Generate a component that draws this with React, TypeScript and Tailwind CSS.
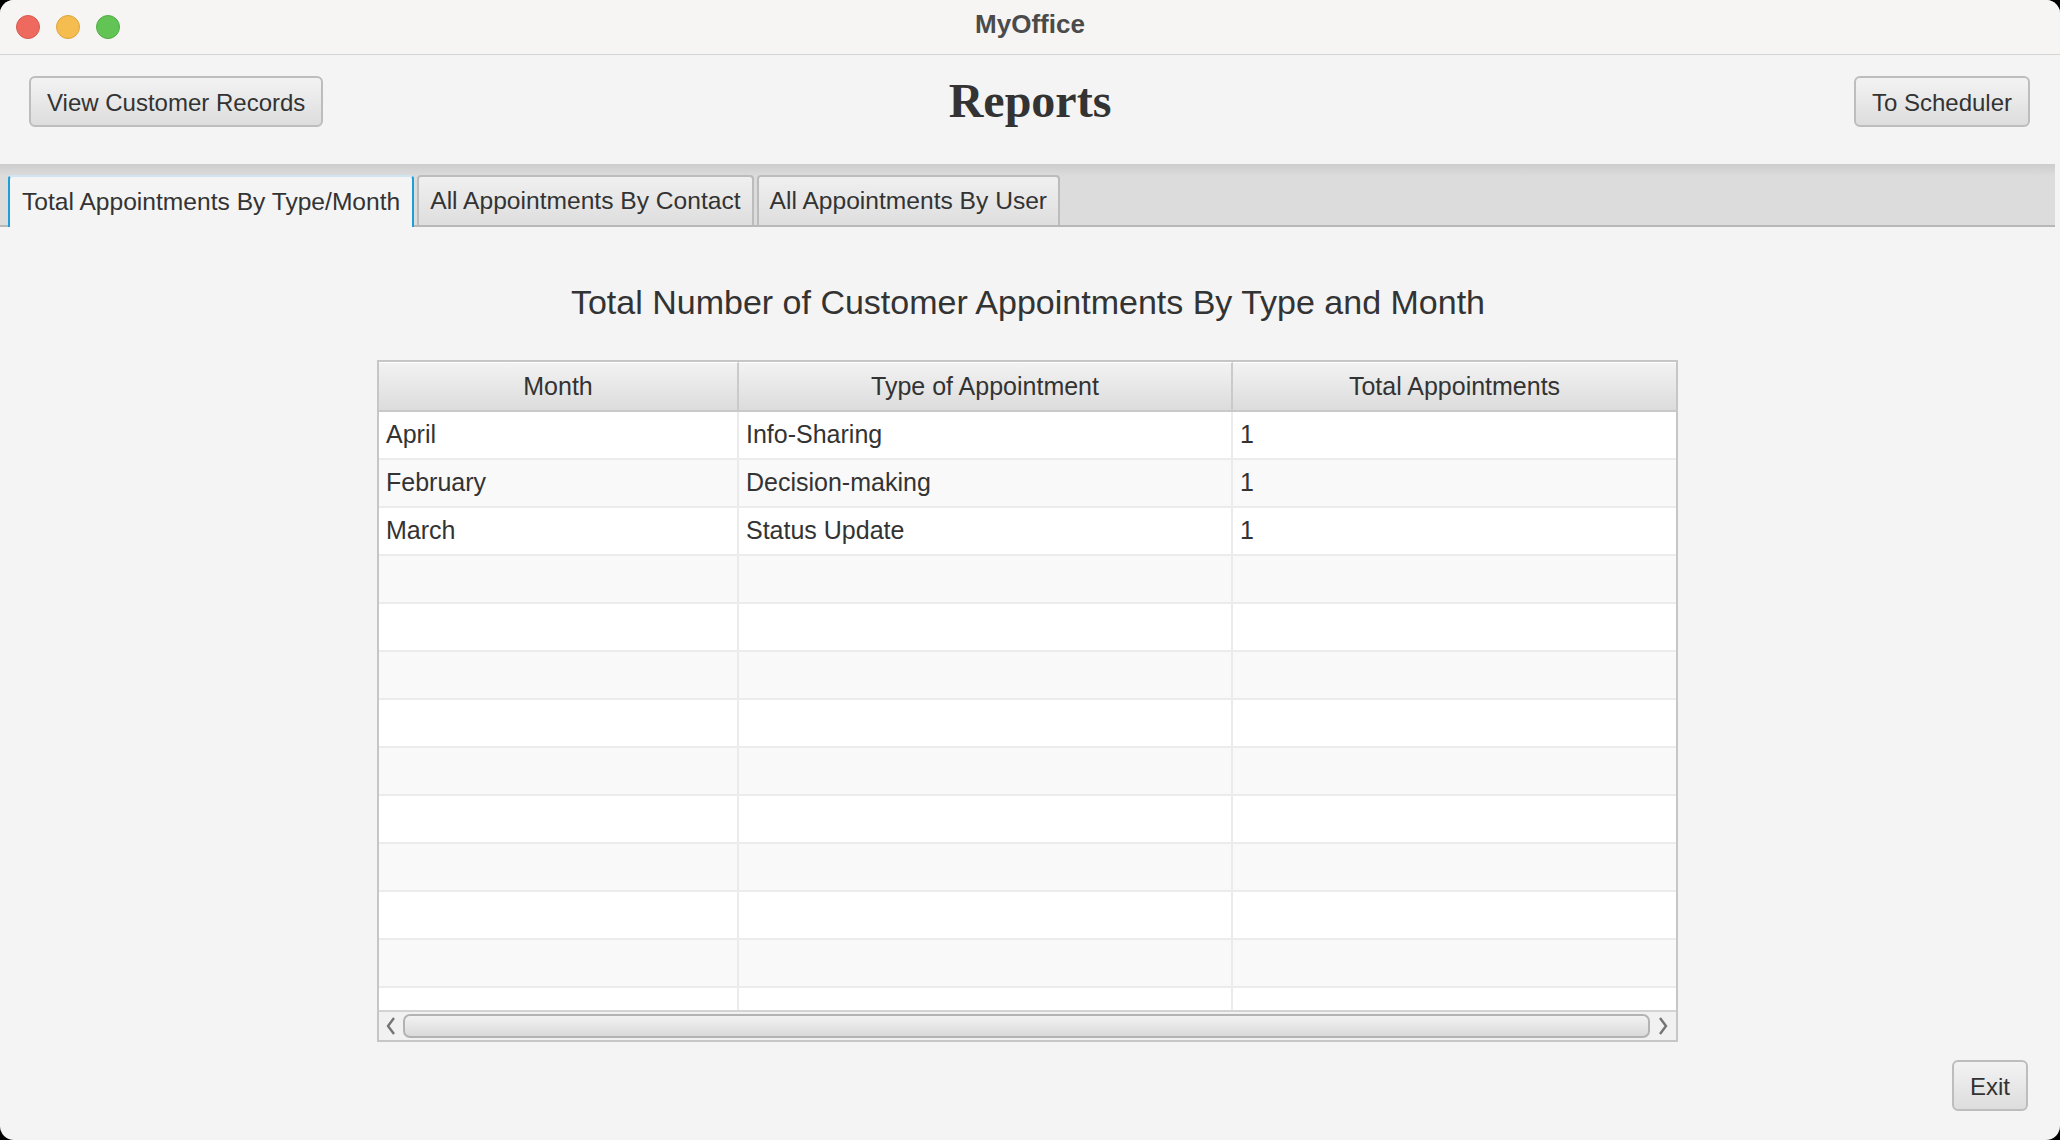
const rows = [
  ["April", "Info-Sharing", "1"],
  ["February", "Decision-making", "1"],
  ["March", "Status Update", "1"],
  ["", "", ""],
  ["", "", ""],
  ["", "", ""],
  ["", "", ""],
  ["", "", ""],
  ["", "", ""],
  ["", "", ""],
  ["", "", ""],
  ["", "", ""],
  ["", "", ""],
];

const tabs = ["Total Appointments By Type/Month", "All Appointments By Contact", "All Appointments By User"];

const FxButton = ({ label }: { label: string }) => (
  <button className="h-[51px] px-[16px] pt-[3px] rounded-[6px] border-2 border-[#bdbdbd] bg-gradient-to-b from-[#f3f3f3] to-[#dddddd] text-[24px] text-[#333333] leading-none">
    {label}
  </button>
);

const Chevron = ({ dir }: { dir: "left" | "right" }) => (
  <svg width="12" height="20" viewBox="0 0 12 20" fill="none">
    <path
      d={dir === "left" ? "M9 2 L3 10 L9 18" : "M3 2 L9 10 L3 18"}
      stroke="#747474"
      strokeWidth="2.4"
      strokeLinejoin="miter"
    />
  </svg>
);

export default function App() {
  return (
    <div className="w-[2060px] h-[1140px] bg-black font-['Liberation_Sans',Arial,sans-serif]">
      <div className="w-full h-full rounded-[14px] overflow-hidden bg-[#f4f4f4] flex flex-col">
        {/* title bar */}
        <div className="h-[55px] shrink-0 bg-[#f6f5f4] border-b border-[#d4d4d4] grid grid-cols-[1fr_auto_1fr] items-center">
          <div className="flex items-center gap-[16px] pl-[16px]">
            <span className="w-[24px] h-[24px] rounded-full bg-[#ee6a5f] border border-[#d85a50]" />
            <span className="w-[24px] h-[24px] rounded-full bg-[#f5bd4f] border border-[#dca53c]" />
            <span className="w-[24px] h-[24px] rounded-full bg-[#61c454] border border-[#52ad45]" />
          </div>
          <div className="text-[26px] font-bold text-[#4b4b4b] pb-[5px]">MyOffice</div>
          <div />
        </div>

        {/* header */}
        <div className="h-[109px] shrink-0 grid grid-cols-[1fr_auto_1fr] items-start pt-[21px] px-[29px]">
          <div>
            <FxButton label="View Customer Records" />
          </div>
          <div className="font-['Liberation_Serif',serif] font-bold text-[48px] text-[#333333] leading-[52px] mt-[-1px]">
            Reports
          </div>
          <div className="flex justify-end pr-[1px]">
            <FxButton label="To Scheduler" />
          </div>
        </div>

        {/* tab bar */}
        <div className="h-[63px] shrink-0 mr-[5px] bg-gradient-to-b from-[#cdcdcd] via-[#dcdcdc] via-[20%] to-[#dcdcdc] border-b-2 border-[#b8b8b8] flex items-end gap-[3px] pl-[8px]">
          {tabs.map((t, i) =>
            i === 0 ? (
              <div
                key={t}
                className="h-[52px] mb-[-2px] px-[12px] flex items-center rounded-t-[4px] bg-[#f4f4f4] border-x-2 border-t-2 border-x-[#1a9fd8] border-t-[#cfe6f2] text-[24.6px] text-[#333333]"
              >
                {t}
              </div>
            ) : (
              <div
                key={t}
                className="h-[50px] px-[11px] flex items-center rounded-t-[4px] bg-gradient-to-b from-[#f0f0f0] to-[#dedede] border-x-2 border-t-2 border-[#bcbcbc] text-[24.6px] text-[#333333]"
              >
                {t}
              </div>
            )
          )}
        </div>

        {/* content */}
        <div className="flex-1 flex flex-col">
          <h1 className="text-center text-[34px] leading-[40px] text-[#333333] pt-[55px] mb-[38px] pr-[4px]">
            Total Number of Customer Appointments By Type and Month
          </h1>

          <div className="ml-[377px] w-[1301px] h-[682px] border-2 border-[#c6c6c6] bg-white flex flex-col">
            <div className="h-[50px] shrink-0 grid grid-cols-[360px_494px_1fr] bg-gradient-to-b from-[#f3f3f3] to-[#dcdcdc] border-b-2 border-[#c9c9c9]">
              {["Month", "Type of Appointment", "Total Appointments"].map((h, i) => (
                <div
                  key={h}
                  className={`flex items-center justify-center text-[25px] text-[#333333] border-t border-white ${i < 2 ? "border-r-2 border-r-[#cacaca]" : ""}`}
                >
                  {h}
                </div>
              ))}
            </div>
            <div className="flex-1 overflow-hidden">
              {rows.map((r, i) => (
                <div
                  key={i}
                  className={`h-[48px] grid grid-cols-[360px_494px_1fr] border-b-2 border-[#ececec] ${i % 2 === 0 ? "bg-white" : "bg-[#f9f9f9]"}`}
                >
                  {r.map((c, j) => (
                    <div
                      key={j}
                      className={`flex items-center pl-[7px] text-[25px] text-[#333333] ${j < 2 ? "border-r-2 border-[#ebebeb]" : ""}`}
                    >
                      {c}
                    </div>
                  ))}
                </div>
              ))}
            </div>
            <div className="h-[30px] shrink-0 bg-[#f1f1f1] border-t-2 border-[#d3d3d3] flex items-center">
              <div className="w-[24px] flex justify-center">
                <Chevron dir="left" />
              </div>
              <div className="flex-1 h-[24px] rounded-[7px] border-2 border-[#b3b3b3] bg-gradient-to-b from-[#f2f2f2] to-[#dadada]" />
              <div className="w-[26px] flex justify-center">
                <Chevron dir="right" />
              </div>
            </div>
          </div>

          <div className="flex justify-end pr-[32px] mt-[18px]">
            <FxButton label="Exit" />
          </div>
        </div>
      </div>
    </div>
  );
}
